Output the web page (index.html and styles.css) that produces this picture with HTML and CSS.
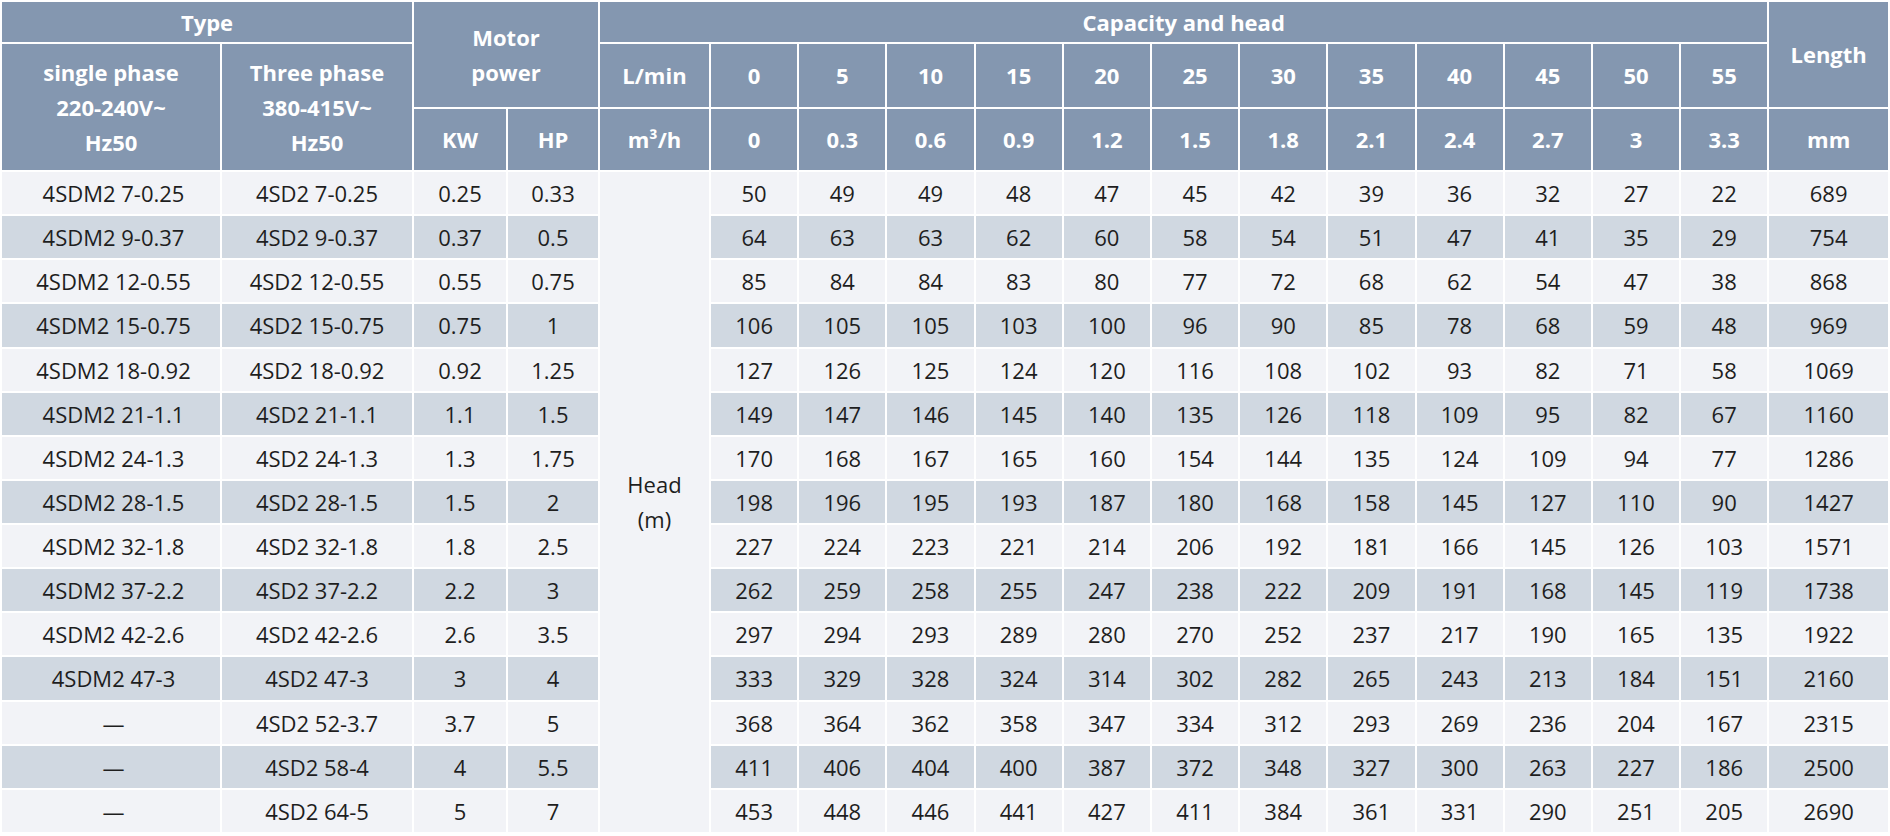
FILE: index.html
```html
<!DOCTYPE html>
<html>
<head>
<meta charset="utf-8">
<link rel="stylesheet" href="styles.css">
</head>
<body>
<table class="spec">
<colgroup>
<col class="c-single"><col class="c-three"><col class="c-kw"><col class="c-hp"><col class="c-unit">
<col class="c-num"><col class="c-num"><col class="c-num"><col class="c-num"><col class="c-num"><col class="c-num">
<col class="c-num"><col class="c-num"><col class="c-num"><col class="c-num"><col class="c-num"><col class="c-num">
<col class="c-len">
</colgroup>
<thead>
<tr class="h1">
<th colspan="2">Type</th>
<th colspan="2" rowspan="2">Motor<br>power</th>
<th colspan="13">Capacity and head</th>
<th rowspan="2">Length</th>
</tr>
<tr class="h2">
<th rowspan="2">single phase<br>220-240V~<br>Hz50</th>
<th rowspan="2">Three phase<br>380-415V~<br>Hz50</th>
<th>L/min</th>
<th>0</th><th>5</th><th>10</th><th>15</th><th>20</th><th>25</th><th>30</th><th>35</th><th>40</th><th>45</th><th>50</th><th>55</th>
</tr>
<tr class="h3">
<th>KW</th><th>HP</th><th>m³/h</th>
<th>0</th><th>0.3</th><th>0.6</th><th>0.9</th><th>1.2</th><th>1.5</th><th>1.8</th><th>2.1</th><th>2.4</th><th>2.7</th><th>3</th><th>3.3</th>
<th>mm</th>
</tr>
</thead>
<tbody>
<tr class="lt"><td class="first">4SDM2 7-0.25</td><td>4SD2 7-0.25</td><td>0.25</td><td>0.33</td><td class="head" rowspan="15">Head<br>(m)</td><td>50</td><td>49</td><td>49</td><td>48</td><td>47</td><td>45</td><td>42</td><td>39</td><td>36</td><td>32</td><td>27</td><td>22</td><td>689</td></tr>
<tr class="dk"><td class="first">4SDM2 9-0.37</td><td>4SD2 9-0.37</td><td>0.37</td><td>0.5</td><td>64</td><td>63</td><td>63</td><td>62</td><td>60</td><td>58</td><td>54</td><td>51</td><td>47</td><td>41</td><td>35</td><td>29</td><td>754</td></tr>
<tr class="lt"><td class="first">4SDM2 12-0.55</td><td>4SD2 12-0.55</td><td>0.55</td><td>0.75</td><td>85</td><td>84</td><td>84</td><td>83</td><td>80</td><td>77</td><td>72</td><td>68</td><td>62</td><td>54</td><td>47</td><td>38</td><td>868</td></tr>
<tr class="dk"><td class="first">4SDM2 15-0.75</td><td>4SD2 15-0.75</td><td>0.75</td><td>1</td><td>106</td><td>105</td><td>105</td><td>103</td><td>100</td><td>96</td><td>90</td><td>85</td><td>78</td><td>68</td><td>59</td><td>48</td><td>969</td></tr>
<tr class="lt"><td class="first">4SDM2 18-0.92</td><td>4SD2 18-0.92</td><td>0.92</td><td>1.25</td><td>127</td><td>126</td><td>125</td><td>124</td><td>120</td><td>116</td><td>108</td><td>102</td><td>93</td><td>82</td><td>71</td><td>58</td><td>1069</td></tr>
<tr class="dk"><td class="first">4SDM2 21-1.1</td><td>4SD2 21-1.1</td><td>1.1</td><td>1.5</td><td>149</td><td>147</td><td>146</td><td>145</td><td>140</td><td>135</td><td>126</td><td>118</td><td>109</td><td>95</td><td>82</td><td>67</td><td>1160</td></tr>
<tr class="lt"><td class="first">4SDM2 24-1.3</td><td>4SD2 24-1.3</td><td>1.3</td><td>1.75</td><td>170</td><td>168</td><td>167</td><td>165</td><td>160</td><td>154</td><td>144</td><td>135</td><td>124</td><td>109</td><td>94</td><td>77</td><td>1286</td></tr>
<tr class="dk"><td class="first">4SDM2 28-1.5</td><td>4SD2 28-1.5</td><td>1.5</td><td>2</td><td>198</td><td>196</td><td>195</td><td>193</td><td>187</td><td>180</td><td>168</td><td>158</td><td>145</td><td>127</td><td>110</td><td>90</td><td>1427</td></tr>
<tr class="lt"><td class="first">4SDM2 32-1.8</td><td>4SD2 32-1.8</td><td>1.8</td><td>2.5</td><td>227</td><td>224</td><td>223</td><td>221</td><td>214</td><td>206</td><td>192</td><td>181</td><td>166</td><td>145</td><td>126</td><td>103</td><td>1571</td></tr>
<tr class="dk"><td class="first">4SDM2 37-2.2</td><td>4SD2 37-2.2</td><td>2.2</td><td>3</td><td>262</td><td>259</td><td>258</td><td>255</td><td>247</td><td>238</td><td>222</td><td>209</td><td>191</td><td>168</td><td>145</td><td>119</td><td>1738</td></tr>
<tr class="lt"><td class="first">4SDM2 42-2.6</td><td>4SD2 42-2.6</td><td>2.6</td><td>3.5</td><td>297</td><td>294</td><td>293</td><td>289</td><td>280</td><td>270</td><td>252</td><td>237</td><td>217</td><td>190</td><td>165</td><td>135</td><td>1922</td></tr>
<tr class="dk"><td class="first">4SDM2 47-3</td><td>4SD2 47-3</td><td>3</td><td>4</td><td>333</td><td>329</td><td>328</td><td>324</td><td>314</td><td>302</td><td>282</td><td>265</td><td>243</td><td>213</td><td>184</td><td>151</td><td>2160</td></tr>
<tr class="lt"><td class="first">—</td><td>4SD2 52-3.7</td><td>3.7</td><td>5</td><td>368</td><td>364</td><td>362</td><td>358</td><td>347</td><td>334</td><td>312</td><td>293</td><td>269</td><td>236</td><td>204</td><td>167</td><td>2315</td></tr>
<tr class="dk"><td class="first">—</td><td>4SD2 58-4</td><td>4</td><td>5.5</td><td>411</td><td>406</td><td>404</td><td>400</td><td>387</td><td>372</td><td>348</td><td>327</td><td>300</td><td>263</td><td>227</td><td>186</td><td>2500</td></tr>
<tr class="lt"><td class="first">—</td><td>4SD2 64-5</td><td>5</td><td>7</td><td>453</td><td>448</td><td>446</td><td>441</td><td>427</td><td>411</td><td>384</td><td>361</td><td>331</td><td>290</td><td>251</td><td>205</td><td>2690</td></tr>
</tbody>
</table>
</body>
</html>
```
FILE: styles.css
```css
html, body {
  margin: 0;
  padding: 0;
  background: #ffffff;
}
.spec {
  width: 1890px;
  table-layout: fixed;
  border-collapse: separate;
  border-spacing: 2px;
  font-family: "Open Sans", "Noto Sans", sans-serif;
  font-size: 22px;
  color: #1e1e1e;
}
.c-single { width: 218px; }
.c-three { width: 190px; }
.c-kw { width: 92px; }
.c-hp { width: 90px; }
.c-unit { width: 109px; }
.c-num { width: 86.2px; }
.c-len { width: 118.6px; }

.spec th,
.spec td {
  padding: 0;
  text-align: center;
  vertical-align: middle;
  white-space: nowrap;
}
.spec th {
  background: #8497b0;
  color: #ffffff;
  font-weight: 700;
  line-height: 35px;
}
.h1 { height: 40px; }
.h2 { height: 63px; }
.h3 { height: 61px; }
.spec tbody tr { height: 42.13px; }
.spec td { line-height: 26px; }
.spec td.first { padding-left: 5px; }
.lt td { background: #f2f3f7; }
.dk td { background: #d0d8e1; }
.spec td.head {
  background: #f2f3f7;
  line-height: 35px;
}
```
